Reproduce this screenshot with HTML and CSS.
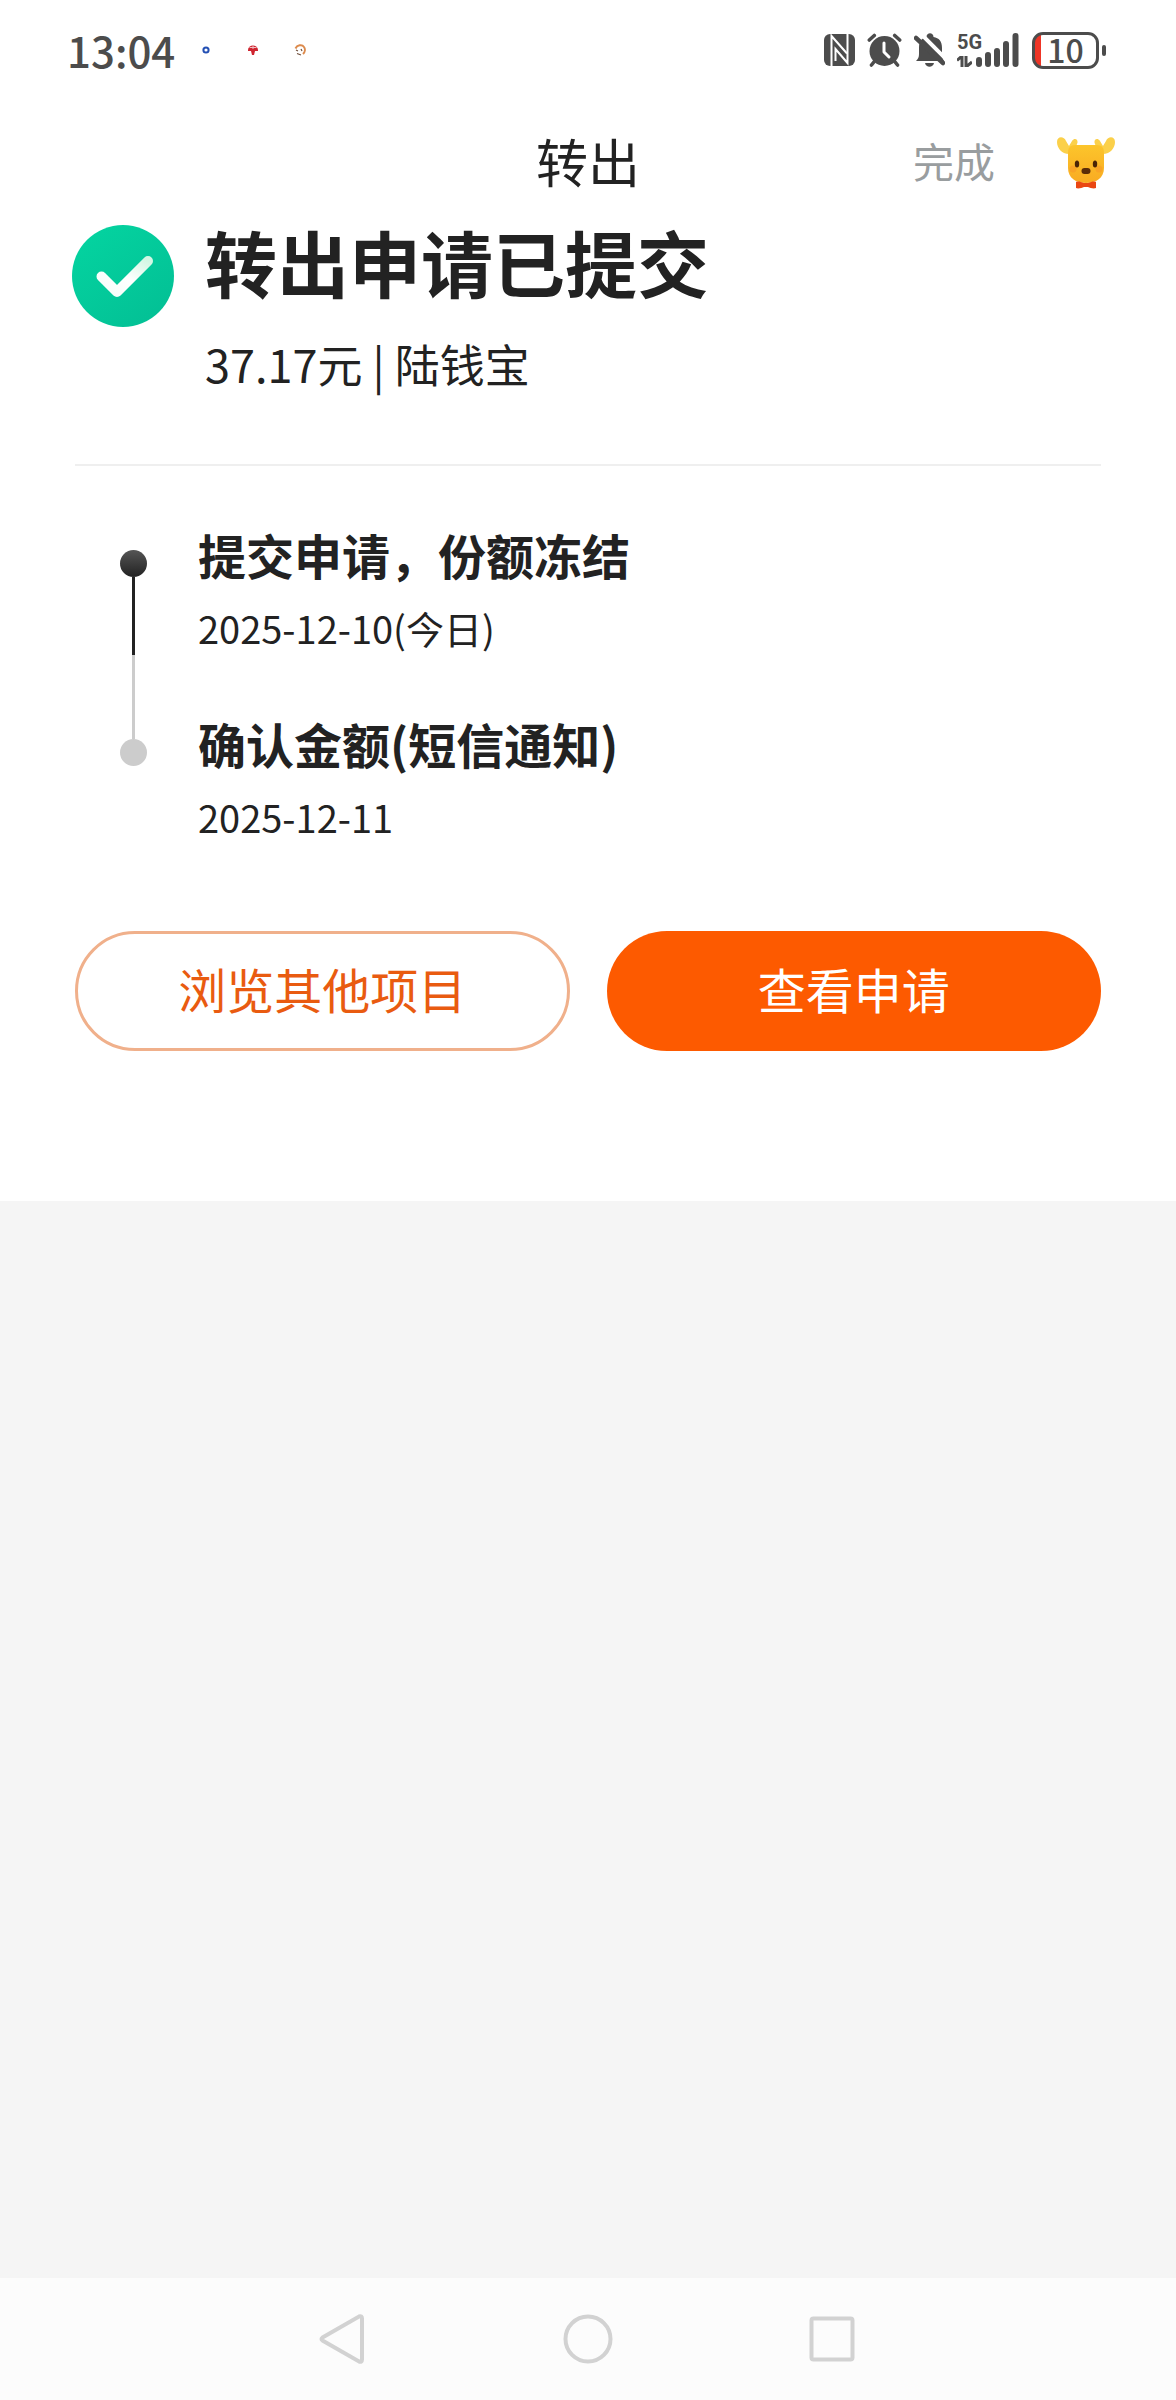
FILE: index.html
```html
<!DOCTYPE html>
<html lang="zh-CN">
<head>
<meta charset="utf-8">
<meta name="viewport" content="width=device-width, initial-scale=1">
<title>转出</title>
<link rel="stylesheet" href="styles.css">
</head>
<body>
<div class="status-bar">
  <div class="status-left">
    <time class="clock">13:04</time>
    <div class="notices">
      <svg class="notice" viewBox="0 0 12 12" aria-hidden="true"><circle cx="6" cy="6" r="2.600" fill="none" stroke="#2450b4" stroke-width="2"/></svg>
      <svg class="notice" viewBox="0 0 12 12" aria-hidden="true"><path d="M1 6a5 4.500 0 0 1 10 0v1H8l-1 4H5L4 7H1z" fill="#cf2530"/><path d="M2.500 3.500h7M6 2v3" stroke="#fff" stroke-width="1" opacity=".7"/></svg>
      <svg class="notice" viewBox="0 0 12 12" aria-hidden="true"><path d="M1.500 4.500C3 1 8 0 10 3c1.500 2 1 5-1 7" fill="none" stroke="#dc8a4c" stroke-width="2"/><path d="M2 6l2 1M3 9.500l4 1.500M7 5l1 2" stroke="#71503c" stroke-width="1.200"/></svg>
    </div>
  </div>
  <div class="status-right">
    <svg class="sys-icon nfc" viewBox="0 0 31 32" aria-label="NFC"><rect width="31" height="32" rx="6" fill="#4c4c4c"/><path d="M7.500 32V2L23 19.500" fill="none" stroke="#fff" stroke-width="2"/><path d="M23.500 0v29L11.500 15v12" fill="none" stroke="#fff" stroke-width="2"/></svg>
    <svg class="sys-icon alarm" viewBox="0 0 34 34" aria-label="闹钟"><circle cx="17" cy="18" r="15" fill="#4c4c4c"/><path d="M1.800 7l5-4.500M32.200 7l-5-4.500M8 27l-4 5M26 27l4 5" stroke="#4c4c4c" stroke-width="3.600" stroke-linecap="round"/><path d="M16.500 10v9l5 5" fill="none" stroke="#fff" stroke-width="3" stroke-linecap="round" stroke-linejoin="round"/></svg>
    <svg class="sys-icon bell" viewBox="0 0 31 34" aria-label="静音"><path d="M2 28c2-2 3-3.500 3-7v-6C5 8 8 5 12.500 4c0-5 7-5 7 0C25 5 28 8 28 15v6c0 3 1 5 2 7z" fill="#4c4c4c"/><path d="M11 30h9c-1 5-8 5-9 0z" fill="#4c4c4c"/><path d="M4 -2l29 29" stroke="#fff" stroke-width="4"/><path d="M0 0h5v4L0 8z" fill="#fff"/><path d="M2 5l27 25" stroke="#4c4c4c" stroke-width="4.500" stroke-linecap="round"/></svg>
    <div class="signal">
      <div class="network"><span>5G</span>
        <svg class="arrows" viewBox="0 0 15 11" aria-hidden="true"><path d="M0 4.500L5 0v11M9 11V0M9 11l6-5" fill="none" stroke="#4c4c4c" stroke-width="3"/></svg>
      </div>
      <svg class="bars" viewBox="0 0 44 34" aria-label="信号"><path d="M3 27v4M12 22v9M21 18v13M30 11v20M39.500 3v28" stroke="#4c4c4c" stroke-width="6" stroke-linecap="round"/></svg>
    </div>
    <div class="battery"><span class="battery-level">10</span></div>
  </div>
</div>

<header class="app-bar">
  <h1 class="page-title">转出</h1>
  <div class="app-actions">
    <button class="done" type="button">完成</button>
    <button class="mascot-button" type="button" aria-label="客服">
      <svg class="mascot" viewBox="0 0 58 52">
        <defs>
          <linearGradient id="face" x1="0" y1="0" x2="0" y2="1"><stop offset="0" stop-color="#fcc52b"/><stop offset="1" stop-color="#f9ab22"/></linearGradient>
        </defs>
        <path d="M14 17C5 18 0 11 0 5c0-6 7-6 9-1l3 5 3-5c3-4 7-1 5 3l-3 8zM44 17c9 1 14-6 14-12 0-6-7-6-9-1l-3 5-3-5c-3-4-7-1-5 3l3 8z" fill="#fbd04a"/>
        <path d="M18 8h22c5 0 7 3 7 8v15c0 10-8 15-18 15s-18-5-18-15V16c0-5 2-8 7-8z" fill="url(#face)"/>
        <circle cx="16" cy="32" r="3.500" fill="#f88d28" opacity=".4"/><circle cx="42" cy="32" r="3.500" fill="#f88d28" opacity=".4"/>
        <ellipse cx="20" cy="27" rx="2.200" ry="3.600" fill="#4a2406"/><ellipse cx="38" cy="27" rx="2.200" ry="3.600" fill="#4a2406"/>
        <rect x="24.500" y="31" width="9" height="6" rx="3" fill="#5b2c08"/>
        <path d="M19 45c2-1 5 0 8 1h4c3-1 6-2 8-1v6c-2 1-6 0-8-1h-4c-2 1-6 2-8 1z" fill="#ea4712"/>
      </svg>
    </button>
  </div>
</header>

<main class="card">
  <section class="result">
    <svg class="success" viewBox="0 0 102 102" aria-hidden="true">
      <defs>
        <linearGradient id="disc" x1="0" y1="0" x2=".8" y2="1"><stop offset="0" stop-color="#04d5a1"/><stop offset="1" stop-color="#03c095"/></linearGradient>
        <linearGradient id="tick" x1="1" y1="0" x2="0" y2="1"><stop offset="0" stop-color="#d3f7e4"/><stop offset=".5" stop-color="#fff"/><stop offset="1" stop-color="#f5fdf9"/></linearGradient>
      </defs>
      <circle cx="51" cy="51" r="51" fill="url(#disc)"/>
      <path d="M29.500 51.500L45 67l31-31" fill="none" stroke="url(#tick)" stroke-width="10" stroke-linecap="round" stroke-linejoin="round"/>
    </svg>
    <div class="result-text">
      <h2 class="result-title">转出申请已提交</h2>
      <p class="result-detail">37.17元 | 陆钱宝</p>
    </div>
  </section>

  <ol class="steps">
    <li class="step step-current">
      <h3 class="step-title">提交申请，份额冻结</h3>
      <p class="step-date">2025-12-10(今日)</p>
    </li>
    <li class="step">
      <h3 class="step-title">确认金额(短信通知)</h3>
      <p class="step-date">2025-12-11</p>
    </li>
  </ol>

  <div class="actions">
    <button class="button button-outline" type="button">浏览其他项目</button>
    <button class="button button-primary" type="button">查看申请</button>
  </div>
</main>

<nav class="system-nav" aria-label="系统导航">
  <button class="nav-button" type="button" aria-label="返回"><svg class="nav-icon" viewBox="0 0 50 50"><path d="M4.500 23.500L41 2.500q3-1 3 2v41q0 3-3 2L4.500 26.500q-2-1.500 0-3z"/></svg></button>
  <button class="nav-button" type="button" aria-label="主页"><svg class="nav-icon" viewBox="0 0 50 50"><circle cx="25" cy="25" r="22.500"/></svg></button>
  <button class="nav-button" type="button" aria-label="最近任务"><svg class="nav-icon" viewBox="0 0 50 50"><rect x="3.500" y="4.500" width="41" height="41" rx="2"/></svg></button>
</nav>
</body>
</html>
```
FILE: styles.css
```css
* {
  box-sizing: border-box;
}

body {
  margin: 0;
  min-height: 100vh;
  display: flex;
  flex-direction: column;
  background: #f5f5f5;
  color: #222;
  font-family: "Noto Sans CJK SC", "Noto Sans", sans-serif;
}

h1, h2, h3, p, ol {
  margin: 0;
  padding: 0;
}

svg {
  display: block;
}

button {
  margin: 0;
  padding: 0;
  border: 0;
  background: none;
  font: inherit;
  cursor: pointer;
}

/* Status bar */
.status-bar {
  display: flex;
  align-items: center;
  justify-content: space-between;
  height: 100px;
  padding: 0 71px 0 67px;
  background: #fff;
  color: #4c4c4c;
}

.status-left,
.status-right,
.notices {
  display: flex;
  align-items: center;
}

.status-left {
  gap: 25px;
}

.clock {
  font-size: 42px;
  font-weight: 500;
  line-height: 60px;
}

.notices {
  gap: 35px;
}

.notice {
  width: 12px;
  height: 12px;
}

.status-right {
  gap: 12px;
}

.sys-icon {
  height: 34px;
}

.nfc {
  width: 31px;
}

.alarm {
  width: 35px;
}

.bell {
  width: 31px;
}

.signal {
  display: flex;
  align-items: flex-end;
}

.network {
  width: 19px;
  font-family: Roboto, sans-serif;
  font-size: 20px;
  font-weight: 700;
  line-height: 18px;
}

.arrows {
  width: 15px;
  height: 11px;
  margin-top: 5px;
}

.bars {
  width: 44px;
  height: 34px;
}

.battery {
  position: relative;
  width: 67px;
  height: 37px;
  margin-right: 6px;
  border: 3px solid #4c4c4c;
  border-radius: 11px;
  background: linear-gradient(to right, #ee3526 6px, #fff 6px);
  text-align: center;
}

.battery::after {
  content: "";
  position: absolute;
  top: 10px;
  right: -10px;
  width: 4px;
  height: 11px;
  border-radius: 2px;
  background: #4c4c4c;
}

.battery-level {
  display: block;
  font-size: 32px;
  font-weight: 500;
  line-height: 29px;
}

/* App bar */
.app-bar {
  display: grid;
  grid-template-columns: 1fr auto 1fr;
  align-items: center;
  height: 125px;
  padding: 0 61px;
  background: #fff;
}

.page-title {
  grid-column: 2;
  padding-bottom: 4px;
  font-size: 52px;
  font-weight: 400;
  line-height: 72px;
}

.app-actions {
  display: flex;
  align-items: center;
  justify-content: flex-end;
  gap: 62px;
}

.done {
  padding-bottom: 6px;
  color: #999d9f;
  font-size: 41px;
  line-height: 60px;
}

.mascot {
  width: 58px;
  height: 52px;
}

/* Result card */
.card {
  padding: 0 75px 150px;
  background: #fff;
}

.result {
  display: flex;
  gap: 31px;
  margin: 0 -3px;
  padding-bottom: 68px;
}

.success {
  flex: none;
  width: 102px;
  height: 102px;
}

.result-title {
  font-size: 72px;
  font-weight: 700;
  line-height: 72px;
}

.result-detail {
  margin-top: 35px;
  font-size: 45px;
  line-height: 64px;
}

/* Progress steps */
.steps {
  padding: 56px 0 84px;
  border-top: 2px solid #efefef;
  list-style: none;
}

.step {
  position: relative;
  padding-left: 123px;
  padding-bottom: 53px;
}

.step::before {
  content: "";
  position: absolute;
  top: 28px;
  left: 45px;
  width: 27px;
  height: 27px;
  border-radius: 50%;
  background: #ccc;
}

.step-current::before {
  background: linear-gradient(#555, #222);
}

.step-current::after {
  content: "";
  position: absolute;
  top: 55px;
  left: 57px;
  width: 3px;
  height: 162px;
  background: linear-gradient(#222 48%, #ccc 48%);
}

.step-title {
  font-size: 48px;
  font-weight: 700;
  line-height: 64px;
}

.step-date {
  margin-top: 12px;
  font-size: 38px;
  line-height: 60px;
}

.step:last-child {
  padding-bottom: 0;
}

/* Actions */
.actions {
  display: grid;
  grid-template-columns: 1fr 1fr;
  gap: 37px;
}

.button {
  height: 120px;
  padding-bottom: 6px;
  border-radius: 60px;
  font-size: 48px;
  line-height: 64px;
}

.button-outline {
  border: 3px solid #f0b08b;
  color: #e95b10;
}

.button-primary {
  background: #fd5a00;
  color: #fff;
}

/* System navigation */
.system-nav {
  display: flex;
  align-items: center;
  justify-content: center;
  gap: 195px;
  height: 122px;
  margin-top: auto;
  background: #fcfcfc;
}

.nav-icon {
  width: 50px;
  height: 50px;
  fill: none;
  stroke: #d2d2d2;
  stroke-width: 4;
}
```
